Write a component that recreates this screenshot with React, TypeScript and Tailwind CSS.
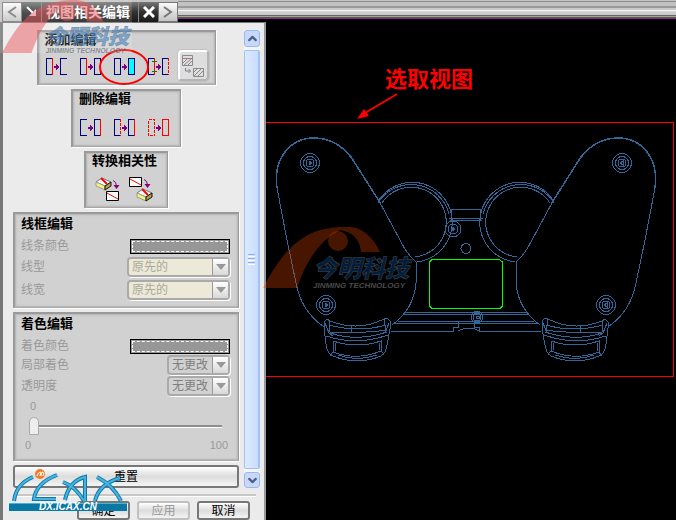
import type { ReactNode } from "react";
import { ChevronDown, ChevronUp } from "lucide-react";

const NAVY = "#000080";
const RED = "#ff0000";

interface GroupProps {
  title: string;
  className?: string;
  children: ReactNode;
}

const Group = ({ title, className = "", children }: GroupProps) => (
  <fieldset
    className={`border border-t-2 border-l-2 border-[#9a9a9a] border-b-[#a8a8a8] bg-[#d1d1d1] px-1.5 shadow-[1px_1px_0_#ffffff,inset_1px_1px_2px_#b4b4b4,inset_-1px_-1px_2px_#b4b4b4] ${className}`}
  >
    <h2 className="text-[13px] leading-4 font-bold whitespace-nowrap text-black">
      {title}
    </h2>
    {children}
  </fieldset>
);

interface EditIconProps {
  label: string;
  children: ReactNode;
}

const EditIcon = ({ label, children }: EditIconProps) => (
  <button type="button" aria-label={label} className="block shrink-0">
    <svg
      width="22"
      height="18"
      viewBox="0 0 22 18"
      fill="none"
      shapeRendering="crispEdges"
    >
      {children}
      <path d="M8 9h3" stroke="#800080" strokeWidth="2" />
      <path d="M10 6l3 3-3 3z" fill="#800080" />
    </svg>
  </button>
);

// open bracket and the side that closes it
const Bracket = ({ x, color = NAVY }: { x: number; color?: string }) => (
  <path d={`M${x + 6.5} .5h-6v16h6`} stroke={color} />
);

const Side = ({
  x,
  color = RED,
  dashed = false,
}: {
  x: number;
  color?: string;
  dashed?: boolean;
}) => (
  <path
    d={`M${x + 6.5} 0v17`}
    stroke={color}
    strokeDasharray={dashed ? "3 1" : undefined}
  />
);

const Block = ({ x, y }: { x: number; y: number }) => (
  <g transform={`translate(${x} ${y})`}>
    <path d="M1 5l6-4 9 4-6 4z" fill="#fff" stroke="#777" />
    <path d="M1 5v4l9 4V9z" fill="#f6f27a" stroke="#999" />
    <path d="M10 9l6-4v4l-6 4z" fill="#a8a848" stroke="#111" />
    <path d="M6 1l6 6" stroke={RED} strokeWidth="2" />
  </g>
);

const Sheet = ({ x, y }: { x: number; y: number }) => (
  <g transform={`translate(${x} ${y})`}>
    <path d="M.5.5h12v9H.5z" fill="#fff" stroke="#000" />
    <path d="M1 2l11 6" stroke={RED} />
  </g>
);

const ColorRow = ({ label }: { label: string }) => (
  <div className="flex h-4 items-center justify-between">
    <span>{label}</span>
    <button
      type="button"
      disabled
      aria-label={label}
      className="h-[15px] w-[100px] border border-black bg-[#979797] p-px"
    >
      <span className="block h-full border border-dashed border-white" />
    </button>
  </div>
);

interface SelectRowProps {
  id: string;
  label: string;
  value: string;
  wide?: boolean;
}

const SelectRow = ({ id, label, value, wide = false }: SelectRowProps) => (
  <div className="flex h-5 items-center justify-between">
    <label htmlFor={id}>{label}</label>
    <div
      className={`flex h-5 rounded-[4px] border-2 border-[#aaaaaa] shadow-[1px_1px_0_#ffffff] ${
        wide ? "w-[103px] bg-[#ece9d8]" : "w-[63px] bg-[#d1d1d1]"
      }`}
    >
      <select
        id={id}
        disabled
        className={`min-w-0 flex-1 appearance-none pl-[3px] text-xs leading-4 opacity-100 ${
          wide ? "text-[#aaa899]" : "text-[#7f7f7f]"
        }`}
      >
        <option>{value}</option>
      </select>
      <span className="pointer-events-none flex w-4 items-center justify-center border-l border-[#999999] bg-linear-to-b from-white to-[#d8d8d8]">
        <svg width="10" height="6" viewBox="0 0 10 6">
          <path d="M0 0h10L5 6z" fill="#999" />
        </svg>
      </span>
    </div>
  </div>
);

const PushButton = ({
  children,
  disabled = false,
  className = "",
}: {
  children: ReactNode;
  disabled?: boolean;
  className?: string;
}) => (
  <button
    type="button"
    disabled={disabled}
    className={`rounded-[3px] border-2 bg-linear-to-b from-white via-[#dcdcdc] to-[#f4f4f4] text-xs ${
      disabled
        ? "border-[#c0c0c0] text-[#999999]"
        : "border-[#777777] text-black"
    } ${className}`}
  >
    {children}
  </button>
);

const Strip = () => (
  <div className="h-[19px] flex-1 bg-[linear-gradient(#c4c4c4_1px,#8c8c8c_1px_2px,#c2c2c2_2px_6px,#999999_6px_8px,#c8c8c8_8px_10px,#f6f6f6_10px_11px,#d6d6d6_11px,#c6c6c6_15px,#666666_15px_16px,#aaa693_16px_17px,#555555_17px_18px,#8a2a8a_18px)]" />
);

const TitleBar = () => (
  <div className="flex h-[22px] bg-black">
    <div className="flex w-[178px] bg-[#c4c4c4] pt-0.5 pl-0.5">
      <button
        type="button"
        aria-label="上一个"
        className="flex w-5 items-center justify-center border border-[#777777] bg-linear-to-b from-[#fafafa] to-[#c4c4c4]"
      >
        <svg width="10" height="12" viewBox="0 0 10 12" fill="none">
          <path d="M9 1L2 6l7 5" stroke="#777" strokeWidth="2" />
        </svg>
      </button>
      <div className="flex flex-1 items-center bg-linear-to-b from-[#777777] via-[#333333] to-[#1a1a1a] text-white">
        <svg width="19" height="20" viewBox="0 0 19 20" fill="none">
          <path d="M5 5l6 6" stroke="#fff" strokeWidth="2" />
          <path d="M14 7v7H7z" fill="#fff" />
        </svg>
        <h1 className="h-5 flex-1 border-l border-[#888888] pl-1 text-sm leading-5 font-bold whitespace-nowrap">
          视图相关编辑
        </h1>
        <button
          type="button"
          aria-label="关闭"
          className="flex h-5 w-5 items-center justify-center border-l border-[#888888]"
        >
          <svg width="12" height="12" viewBox="0 0 12 12" fill="none">
            <path d="M1 1l10 10M11 1L1 11" stroke="#fff" strokeWidth="3" />
          </svg>
        </button>
      </div>
      <button
        type="button"
        aria-label="下一个"
        className="flex w-5 items-center justify-center border border-[#777777] bg-linear-to-b from-[#fafafa] to-[#c4c4c4]"
      >
        <svg width="10" height="12" viewBox="0 0 10 12" fill="none">
          <path d="M1 1l7 5-7 5" stroke="#777" strokeWidth="2" />
        </svg>
      </button>
    </div>
    <Strip />
  </div>
);

const ScrollBar = () => (
  <div className="flex w-4 flex-col gap-[3px] bg-[#f5f5f2]">
    <button
      type="button"
      aria-label="向上滚动"
      className="flex h-[17px] items-center justify-center rounded-[3px] border border-[#9db8e8] bg-[#c8d8fb] text-[#4d6185]"
    >
      <ChevronUp size={13} strokeWidth={4} />
    </button>
    <div className="flex flex-1 flex-col items-center justify-center gap-px rounded-[2px] border border-r-2 border-[#a4c2f0] bg-linear-to-r from-[#dceaff] to-[#c9ddff]">
      <i className="h-px w-[7px] bg-[#8fb0ea]" />
      <i className="h-px w-[7px] bg-white" />
      <i className="h-px w-[7px] bg-[#8fb0ea]" />
      <i className="h-px w-[7px] bg-white" />
      <i className="h-px w-[7px] bg-[#8fb0ea]" />
      <i className="h-px w-[7px] bg-white" />
    </div>
    <button
      type="button"
      aria-label="向下滚动"
      className="flex h-4 items-center justify-center rounded-[3px] border border-[#9db8e8] bg-[#c8d8fb] text-[#4d6185]"
    >
      <ChevronDown size={13} strokeWidth={4} />
    </button>
  </div>
);

const EditPanel = () => (
  <section className="flex flex-1 flex-col border-t border-r-2 border-l-3 border-t-[#777777] border-r-[#999999] border-l-[#777777] bg-[#ebebeb] pt-[7px] pr-1 pl-2.5">
    <div className="flex gap-[5px]">
      <div className="flex flex-1 flex-col items-center gap-1">
        <Group title="添加编辑" className="h-[55px] w-[178px]">
          <div className="flex items-start gap-3 pt-2.5 pl-px">
            <EditIcon label="擦除对象">
              <Bracket x={0} />
              <Side x={0} />
              <Bracket x={14} />
            </EditIcon>
            <EditIcon label="编辑完全对象">
              <Bracket x={0} />
              <Side x={0} />
              <Bracket x={14} />
              <Side x={14} color={NAVY} />
            </EditIcon>
            <div className="relative">
              <EditIcon label="编辑着色对象">
                <Bracket x={0} />
                <Side x={0} color={NAVY} />
                <path d="M14.500.5h6v16h-6z" fill="#0ff" stroke={NAVY} />
              </EditIcon>
              <svg
                className="pointer-events-none absolute -top-2.5 -left-4"
                width="52"
                height="38"
                viewBox="0 0 52 38"
                fill="none"
              >
                <ellipse
                  cx="26"
                  cy="19"
                  rx="24"
                  ry="17"
                  stroke={RED}
                  strokeWidth="2"
                />
              </svg>
            </div>
            <EditIcon label="编辑对象段">
              <Bracket x={0} />
              <Side x={0} />
              <path d="M4 3.500h5M4 13.500h5" stroke="#008000" />
              <Bracket x={14} />
              <Side x={14} dashed />
            </EditIcon>
            <button
              type="button"
              disabled
              aria-label="编辑截面视图背景"
              className="-mt-2 -ml-1 flex h-[31px] w-[31px] shrink-0 items-center justify-center rounded-[4px] border-2 border-[#b4b4b4] border-t-white border-l-white bg-[#dedede] shadow-[0_0_0_1px_#c2c2c2]"
            >
              <svg width="24" height="24" viewBox="0 0 24 24" fill="none">
                <path
                  d="M1.500 1.500h10v10h-10zM12.500 14.500h10v8h-10z"
                  stroke="#8b8b8b"
                />
                <path d="M2 4.500h9" stroke="#a87878" />
                <path
                  d="M2 9l4-4M2 12l8-7M6 12l5-5M13 18l3-3M13 22l7-7M17 22l5-5"
                  stroke="#8b8b8b"
                />
                <path d="M4.500 14v3h5M7.500 15l2 2-2 2" stroke="#8d7b94" />
              </svg>
            </button>
          </div>
        </Group>

        <Group title="删除编辑" className="h-[58px] w-[110px]">
          <div className="flex gap-3 pt-3 pl-px">
            <EditIcon label="删除选定的擦除">
              <Bracket x={0} />
              <Bracket x={14} />
              <Side x={14} />
            </EditIcon>
            <EditIcon label="删除选定的编辑">
              <Bracket x={0} />
              <Side x={0} dashed />
              <Bracket x={14} />
              <Side x={14} />
            </EditIcon>
            <EditIcon label="删除所有编辑">
              <path
                d="M.5.500h6v16h-6z"
                stroke={RED}
                strokeDasharray="3 1"
              />
              <path d="M14.500.500h6v16h-6z" stroke={RED} />
            </EditIcon>
          </div>
        </Group>

        <Group title="转换相关性" className="h-[57px] w-[84px]">
          <div className="flex gap-2 pt-2 pl-[3px]">
            <button type="button" aria-label="模型转换到视图">
              <svg width="26" height="26" viewBox="0 0 26 26" fill="none">
                <Block x={0} y={0} />
                <Sheet x={11} y={14} />
                <path d="M18 3.500q3.500 1 3.500 6" stroke="#800080" />
                <path d="M18.500 8h6l-3 4z" fill="#800080" />
              </svg>
            </button>
            <button type="button" aria-label="视图转换到模型">
              <svg width="26" height="26" viewBox="0 0 26 26" fill="none">
                <Sheet x={0} y={0} />
                <Block x={7} y={11} />
                <path d="M15 2.500q3.500 1 3.500 6" stroke="#800080" />
                <path d="M15.500 7h6l-3 4z" fill="#800080" />
              </svg>
            </button>
          </div>
        </Group>

        <Group title="线框编辑" className="h-24 w-full pt-0.5">
          <div className="flex flex-col gap-[3px] pt-1.5 pr-0.5 text-xs leading-4 text-[#999999]">
            <ColorRow label="线条颜色" />
            <SelectRow id="line-type" label="线型" value="原先的" wide />
            <SelectRow id="line-width" label="线宽" value="原先的" wide />
          </div>
        </Group>

        <Group title="着色编辑" className="h-[149px] w-full pt-0.5">
          <div className="flex flex-col gap-px pt-1.5 pr-0.5 text-xs leading-4 text-[#999999]">
            <ColorRow label="着色颜色" />
            <SelectRow id="partial" label="局部着色" value="无更改" />
            <SelectRow id="alpha" label="透明度" value="无更改" />
          </div>
          <div className="flex flex-col px-2 pt-0.5 text-[11px] leading-4 text-[#999999]">
            <output htmlFor="alpha-range" className="pl-px">
              0
            </output>
            <input
              id="alpha-range"
              type="range"
              min={0}
              max={100}
              defaultValue={0}
              disabled
              aria-label="透明度"
              className="mt-[3px] h-[18px] w-[193px] appearance-none bg-[linear-gradient(transparent_8px,#8e8e8e_8px_10px,#ffffff_10px_11px,transparent_11px)] [&::-webkit-slider-thumb]:h-[18px] [&::-webkit-slider-thumb]:w-2.5 [&::-webkit-slider-thumb]:appearance-none [&::-webkit-slider-thumb]:rounded-t-full [&::-webkit-slider-thumb]:rounded-b-[2px] [&::-webkit-slider-thumb]:border [&::-webkit-slider-thumb]:border-[#aaaaaa] [&::-webkit-slider-thumb]:bg-[#eeeeee]"
            />
            <div className="-mx-1 flex justify-between pt-0.5">
              <span>0</span>
              <span>100</span>
            </div>
          </div>
        </Group>

        <PushButton className="h-[23px] w-full leading-4">重置</PushButton>
      </div>
      <ScrollBar />
    </div>
    <hr className="mt-1.5 mr-1 border-t-2 border-b border-[#c8c8c8] border-b-white" />
    <div className="flex justify-end gap-[7px] pt-1 pr-2.5">
      <PushButton className="h-[19px] w-[53px] leading-[14px]">确定</PushButton>
      <PushButton disabled className="h-[19px] w-[53px] leading-[14px]">
        应用
      </PushButton>
      <PushButton className="h-[19px] w-[53px] leading-[14px]">取消</PushButton>
    </div>
  </section>
);

const Screw = ({ x, y }: { x: number; y: number }) => (
  <g>
    <circle cx={x} cy={y} r="9.500" />
    <circle cx={x} cy={y} r="6.500" />
    <circle cx={x} cy={y} r="4" />
    <path d={`M${x - 1} ${y - 2}v4l3-2z`} />
  </g>
);

// one half of the shell, the other one is its mirror about x = 466
const HalfShell = () => (
  <g>
    <path d="M324 327Q301 311 296 283L287 240 277 188C273 160 289 138 314 138C331 138 344 147 353 160L379 201 400 240Q406 253 416 262V283Q414 309 392 325" />
    <path d="M277 188C273 160 289 138 314 138C331 138 344 147 353 160L379 201" strokeWidth="1.500" />
    <path d="M350 155L381 204" />
    <path d="M379 200A40 40 0 1 1 417 262" />
    <path d="M378 203A39 39 0 0 1 449 214" />
    <path d="M382 203A35 35 0 1 1 415 257" />
    <Screw x={310} y={163} />
    <Screw x={326} y={305} />
    <path d="M466 209H451.500V220M466 218.500H449M466 220.500H450" />
    <path d="M405 312.500H466M403 314.500H466M398 321.500H466M395 323.500H466" />
    <path d="M391 331.500H453V327H458V321" />
    <path d="M324 328V322L327 319 330 321Q358 332 384 319L387 318 390 321V329" />
    <path d="M324 328L326 344Q327 354 333 356Q357 366 381 356Q386 353 387 345L390 329" />
    <path d="M330 321L329 332M384 319L386 331M325 323L329 333 333 336M389 323L385 333" />
    <path d="M329 325Q358 333 386 325M330 332H351Q370 333 386 330M330 333Q357 342 387 332M326 336Q357 346 388 335" />
    <path d="M351.500 325V332M333 341Q357 349 381 341V351Q357 361 333 352ZM335 343V351M379 343V350" />
    <path d="M333 352L330 356M381 351L384 354M338 355Q357 362 377 355" />
  </g>
);

const ModelView = () => (
  <svg
    className="block shrink-0"
    width="408"
    height="256"
    viewBox="266 122 408 256"
    fill="none"
    shapeRendering="crispEdges"
  >
    <path d="M266 122.500H673.500V376.500H266" stroke={RED} />
    <g stroke="#336699">
      <HalfShell />
      <g transform="translate(932 0) scale(-1 1)">
        <HalfShell />
      </g>
      <circle cx="453" cy="229" r="8" />
      <circle cx="453" cy="229" r="5" />
      <path d="M452 227v4l3-2z" />
      <circle cx="466" cy="248.500" r="5" />
      <circle cx="477" cy="317" r="6" />
      <circle cx="477" cy="317" r="4" />
      <path d="M476 316h3v2h-3zM458 331L465 328H473L479 331" />
    </g>
    <path
      d="M432 259.500H499L502.500 262V306L500 308.500H432L429.500 306V262Z"
      stroke="#00ff00"
    />
  </svg>
);

const Canvas = () => (
  <main className="flex min-w-0 flex-1 flex-col overflow-hidden bg-black">
    <div className="flex">
      <Strip />
    </div>
    <div className="flex h-[103px] flex-col pt-[49px] pl-[91px]">
      <p className="pl-7 text-[22px] leading-6 font-bold whitespace-nowrap text-[#ff0000]">
        选取视图
      </p>
      <svg width="42" height="28" viewBox="0 0 42 28">
        <path d="M40 2L8 21" stroke={RED} strokeWidth="2" />
        <path d="M0 27L7 17 12 24z" fill={RED} />
      </svg>
    </div>
    <ModelView />
  </main>
);

interface BrandMarkProps {
  arch: string;
  ink: string;
  edge: string;
  className: string;
}

const BrandMark = ({ arch, ink, edge, className }: BrandMarkProps) => (
  <svg
    className={`pointer-events-none absolute ${className}`}
    viewBox="0 0 152 63"
  >
    <path
      d="M0 61C12 38 30 8 62 2Q76-1 88 0Q106 2 117 25H98Q96 6 77 3Q48 18 34 61Z"
      fill={arch}
    />
    <circle cx="75" cy="14" r="10" fill={arch} />
    <text
      x="50"
      y="50"
      fill={ink}
      stroke={edge}
      strokeWidth="0.500"
      className="font-['Noto_Sans_CJK_SC',sans-serif] text-[24px] font-black italic"
    >
      今明科技
    </text>
    <text
      x="50"
      y="61"
      fill={edge}
      className="font-['Liberation_Sans',sans-serif] text-[8px] font-bold italic"
    >
      JINMING TECHNOLOGY
    </text>
  </svg>
);

const SiteLogo = () => (
  <svg
    className="pointer-events-none absolute top-[468px] left-[9px]"
    width="118"
    height="44"
    viewBox="0 0 118 44"
    fill="none"
  >
    <g stroke="#0f76a8" strokeWidth="4">
      <path d="M5 33Q7 16 24 9M48 7Q27 15 25 31H47M54 14Q67 19 75 33M56 32Q60 13 76 9V33M88 9Q104 17 112 33M86 33Q90 16 111 10" />
    </g>
    <g stroke="#45b4df" strokeWidth="2">
      <path d="M5 33Q7 16 24 9M48 7Q27 15 25 31H47M54 14Q67 19 75 33M56 32Q60 13 76 9V33M88 9Q104 17 112 33M86 33Q90 16 111 10" />
    </g>
    <circle cx="31" cy="6" r="5" fill="#f07c28" />
    <path d="M28 8q1-4 4-4l-1 4M32 8l1-4q3 0 1 4" stroke="#fff" />
    <path d="M0 35h118v8H0z" fill="#0878a4" />
    <path d="M0 35.500h118" stroke="#48b2d8" />
    <text
      x="59"
      y="42"
      textAnchor="middle"
      fill="#fff"
      className="font-['Liberation_Sans',sans-serif] text-[10px] font-bold italic"
    >
      DX.ICAX.CN
    </text>
  </svg>
);

export default function App() {
  return (
    <div className="relative flex min-h-screen w-full overflow-hidden bg-black font-['Liberation_Sans','Noto_Sans_CJK_SC',sans-serif]">
      <aside className="flex w-[266px] shrink-0 flex-col">
        <TitleBar />
        <EditPanel />
      </aside>
      <Canvas />
      <div className="pointer-events-none absolute top-0 left-0 h-[53px] w-[132px] bg-white/15" />
      <BrandMark
        className="top-0 left-0.5 h-[55px] w-[132px]"
        arch="rgba(232,88,92,0.5)"
        ink="rgba(70,135,195,0.65)"
        edge="rgba(95,105,120,0.7)"
      />
      <BrandMark
        className="top-[227px] left-[263px] h-[63px] w-[152px]"
        arch="rgba(225,65,0,0.32)"
        ink="#001e3c"
        edge="#4a4a4a"
      />
      <SiteLogo />
    </div>
  );
}
